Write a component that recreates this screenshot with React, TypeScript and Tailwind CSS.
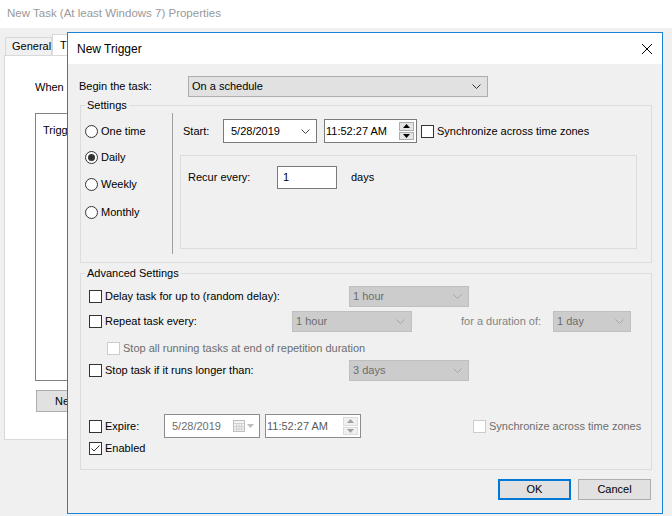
import React from "react";

function Chevron({ color = "#333" }: { color?: string }) {
  return (
    <svg width="9" height="5" viewBox="0 0 9 5" className="shrink-0">
      <path d="M0.5 0.5 L4.5 4.5 L8.5 0.5" fill="none" stroke={color} strokeWidth="1" />
    </svg>
  );
}

function Check({ checked = false, disabled = false }: { checked?: boolean; disabled?: boolean }) {
  return (
    <div
      className={`w-[13px] h-[13px] shrink-0 border bg-white flex items-center justify-center ${
        disabled ? "border-[#cccccc]" : "border-[#333333]"
      }`}
    >
      {checked && (
        <svg width="11" height="11" viewBox="0 0 11 11">
          <path d="M1.5 5.5 L4 8 L9.5 2.5" fill="none" stroke="#333" strokeWidth="1" />
        </svg>
      )}
    </div>
  );
}

function Radio({ checked = false }: { checked?: boolean }) {
  return (
    <div className="w-[13px] h-[13px] shrink-0 rounded-full border border-[#333333] bg-white flex items-center justify-center">
      {checked && <div className="w-[7px] h-[7px] rounded-full bg-[#333333]" />}
    </div>
  );
}

function Combo({ value, w, disabled = false }: { value: string; w: string; disabled?: boolean }) {
  return (
    <div
      className={`${w} h-[21px] shrink-0 border flex items-center justify-between pl-[3px] pr-[6px] ${
        disabled ? "bg-[#cccccc] border-[#bfbfbf] text-[#6d6d6d]" : "bg-[#e1e1e1] border-[#adadad] text-black"
      }`}
    >
      <span>{value}</span>
      <Chevron color={disabled ? "#a6a6a6" : "#333"} />
    </div>
  );
}

// up/down arrows at the right of a time field
function Spinner({ disabled = false }: { disabled?: boolean }) {
  const fill = disabled ? "#a0a0a0" : "#000";
  const box = disabled ? "border-[#dcdcdc] bg-[#f0f0f0]" : "border-[#acacac] bg-[#e5e5e5]";
  return (
    <div className="w-[17px] h-full flex flex-col gap-[1px] py-[2px] pr-[2px]">
      <div className={`flex-1 flex items-center justify-center border ${box}`}>
        <svg width="7" height="4" viewBox="0 0 7 4">
          <path d="M0 4 L3.5 0 L7 4 Z" fill={fill} />
        </svg>
      </div>
      <div className={`flex-1 flex items-center justify-center border ${box}`}>
        <svg width="7" height="4" viewBox="0 0 7 4">
          <path d="M0 0 L3.5 4 L7 0 Z" fill={fill} />
        </svg>
      </div>
    </div>
  );
}

function Row({ children, className = "" }: { children: React.ReactNode; className?: string }) {
  return <div className={`flex items-center ${className}`}>{children}</div>;
}

export default function App() {
  return (
    <div className="w-[672px] h-[516px] relative overflow-hidden bg-[#f0f0f0] font-['Liberation_Sans',Arial,sans-serif] text-[11px] text-black">
      {/* background properties window, mostly hidden by the dialog */}
      <div className="h-[28px] bg-white flex items-center pl-[7px] text-[11.5px] text-[#999999]">
        New Task (At least Windows 7) Properties
      </div>
      <div className="flex items-end pl-[5px] mt-[6px] h-[21px]">
        <div className="h-[18px] w-[47px] border border-b-0 border-[#d9d9d9] bg-[#f0f0f0] flex items-center pl-[6px] text-[11px]">
          General
        </div>
        <div className="h-[21px] w-[15px] overflow-hidden whitespace-nowrap border-t border-l border-[#d9d9d9] bg-white flex items-center pl-[7px] text-[11px]">
          T
        </div>
      </div>
      <div className="ml-[4px] w-[300px] h-[385px] bg-white border border-[#d9d9d9] pl-[30px]">
        <div className="mt-[24px] leading-[14px] w-[32px] overflow-hidden whitespace-nowrap">When</div>
        <div className="mt-[19px] w-[260px] h-[268px] border border-[#828282] pl-[7px] pt-[8px]">
          <div className="w-[24px] overflow-hidden whitespace-nowrap">Trigg</div>
        </div>
        <div className="mt-[9px] ml-[1px] w-[75px] h-[22px] bg-[#e1e1e1] border border-[#adadad] flex items-center pl-[18px]">
          <span>Ne</span>
        </div>
      </div>

      {/* New Trigger dialog */}
      <div className="absolute left-[67px] top-[32px] w-[596px] h-[482px] border border-[#1883d7] bg-[#f0f0f0] flex flex-col">
        <div className="h-[31px] bg-white flex items-center justify-between pl-[9px] pr-[10px] text-[12px]">
          <span>New Trigger</span>
          <svg width="10" height="10" viewBox="0 0 10 10">
            <path d="M0 0 L10 10 M10 0 L0 10" stroke="#000" strokeWidth="1" />
          </svg>
        </div>

        <Row className="mt-[12px] ml-[11px] h-[21px]">
          <div className="w-[109px]">Begin the task:</div>
          <Combo value="On a schedule" w="w-[300px]" />
        </Row>

        {/* Settings */}
        <fieldset className="mt-[1px] ml-[12px] w-[572px] border border-[#dcdcdc]">
          <legend className="ml-[4px] px-[2px] leading-[14px]">Settings</legend>
          <div className="h-[150px] flex">
            <div className="w-[91px] pl-[4px] pt-[13px] flex flex-col">
              <Row>
                <Radio />
                <span className="ml-[3px] leading-[13px]">One time</span>
              </Row>
              <Row className="mt-[13px]">
                <Radio checked />
                <span className="ml-[3px] leading-[13px]">Daily</span>
              </Row>
              <Row className="mt-[14px]">
                <Radio />
                <span className="ml-[3px] leading-[13px]">Weekly</span>
              </Row>
              <Row className="mt-[15px]">
                <Radio />
                <span className="ml-[3px] leading-[13px]">Monthly</span>
              </Row>
            </div>
            <div className="mt-[1px] h-[141px] w-px bg-[#a0a0a0]" />
            <div className="flex-1 pt-[7px]">
              <Row className="pl-[10px] h-[24px]">
                <div className="w-[40px]">Start:</div>
                <div className="w-[94px] h-[24px] bg-white border border-[#7a7a7a] flex items-center justify-between pl-[7px] pr-[6px]">
                  <span>5/28/2019</span>
                  <Chevron color="#444" />
                </div>
                <div className="ml-[7px] w-[93px] h-[24px] bg-white border border-[#7a7a7a] flex items-center justify-between pl-[1px]">
                  <span>11:52:27 AM</span>
                  <Spinner />
                </div>
                <div className="ml-[4px]">
                  <Check />
                </div>
                <span className="ml-[3px]">Synchronize across time zones</span>
              </Row>
              <div className="mt-[12px] ml-[7px] w-[457px] h-[94px] border border-[#dcdcdc] pl-[7px] pt-[10px]">
                <Row>
                  <div className="w-[89px]">Recur every:</div>
                  <div className="w-[60px] h-[23px] bg-white border border-[#7a7a7a] pl-[5px] pt-[3px] leading-[14px]">1</div>
                  <span className="ml-[14px]">days</span>
                </Row>
              </div>
            </div>
          </div>
        </fieldset>

        {/* Advanced Settings */}
        <fieldset className="mt-[3px] ml-[12px] w-[572px] border border-[#dcdcdc]">
          <legend className="ml-[4px] px-[2px] leading-[14px]">Advanced Settings</legend>
          <div className="h-[189px] pl-[8px] flex flex-col">
            <Row className="mt-[6px] h-[21px]">
              <div className="w-[260px] flex items-center">
                <Check />
                <span className="ml-[3px]">Delay task for up to (random delay):</span>
              </div>
              <Combo value="1 hour" w="w-[120px]" disabled />
            </Row>
            <Row className="mt-[4px] h-[21px]">
              <div className="w-[203px] flex items-center">
                <Check />
                <span className="ml-[3px]">Repeat task every:</span>
              </div>
              <Combo value="1 hour" w="w-[120px]" disabled />
              <div className="ml-[49px] w-[92px] text-[#838383]">for a duration of:</div>
              <Combo value="1 day" w="w-[78px]" disabled />
            </Row>
            <Row className="mt-[10px] h-[13px] pl-[18px]">
              <Check disabled />
              <span className="ml-[3px] text-[#6d6d6d]">Stop all running tasks at end of repetition duration</span>
            </Row>
            <Row className="mt-[5px] h-[21px]">
              <div className="w-[260px] flex items-center">
                <Check />
                <span className="ml-[3px]">Stop task if it runs longer than:</span>
              </div>
              <Combo value="3 days" w="w-[120px]" disabled />
            </Row>
            <Row className="mt-[33px] h-[24px]">
              <div className="w-[75px] flex items-center">
                <Check />
                <span className="ml-[3px]">Expire:</span>
              </div>
              <div className="w-[96px] h-[24px] bg-white border border-[#8c8c8c] flex items-center justify-between pl-[7px] pr-[5px] text-[#6d6d6d]">
                <span>5/28/2019</span>
                <div className="flex items-center gap-[2px]">
                  <svg width="12" height="12" viewBox="0 0 12 12">
                    <rect x="0.5" y="0.5" width="11" height="11" fill="#f4f4f4" stroke="#bdbdbd" />
                    <path d="M0.5 3.5 H11.5 M0.5 6.5 H11.5 M0.5 9 H11.5 M3.5 3.5 V11.5 M6 3.5 V11.5 M8.5 3.5 V11.5" stroke="#d0d0d0" strokeWidth="1" />
                  </svg>
                  <svg width="7" height="4" viewBox="0 0 7 4">
                    <path d="M0 0 L3.5 4 L7 0 Z" fill="#bdbdbd" />
                  </svg>
                </div>
              </div>
              <div className="ml-[5px] w-[96px] h-[24px] bg-white border border-[#8c8c8c] flex items-center justify-between pl-[1px] text-[#5a5a5a]">
                <span>11:52:27 AM</span>
                <Spinner disabled />
              </div>
              <div className="ml-[112px]">
                <Check disabled />
              </div>
              <span className="ml-[3px] text-[#6d6d6d]">Synchronize across time zones</span>
            </Row>
            <Row className="mt-[4px] h-[13px]">
              <Check checked />
              <span className="ml-[3px]">Enabled</span>
            </Row>
          </div>
        </fieldset>

        <div className="mt-[9px] pr-[11px] flex justify-end gap-[7px]">
          <div className="w-[73px] h-[21px] bg-[#e1e1e1] border-2 border-[#0078d7] flex items-center justify-center">OK</div>
          <div className="w-[73px] h-[21px] bg-[#e1e1e1] border border-[#adadad] flex items-center justify-center">Cancel</div>
        </div>
      </div>
    </div>
  );
}
